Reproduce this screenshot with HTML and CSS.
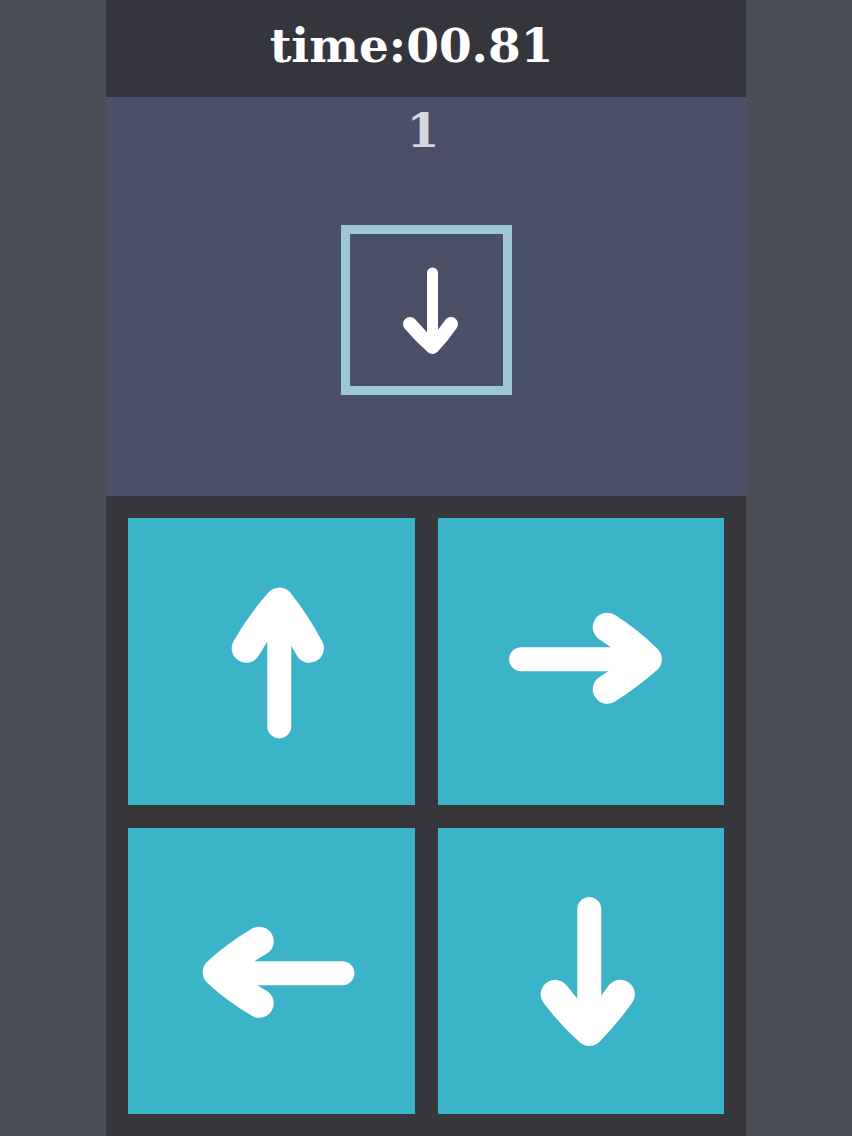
FILE: index.html
```html
<!DOCTYPE html>
<html lang="en">
<head>
<meta charset="utf-8">
<title>Arrow game</title>
<link rel="stylesheet" href="styles.css">
</head>
<body>
<div class="app">
  <header class="header"><span class="timer">time:00.81</span></header>
  <section class="stage">
    <div class="score">1</div>
    <div class="target">
      <svg class="target-arrow" viewBox="0 0 153 152" aria-hidden="true">
        <path class="shaft" d="M82.5 39 V108"/>
        <path class="head" d="M60 90 Q71 103 82.5 113 Q92 103 101 90"/>
      </svg>
    </div>
  </section>
  <section class="pad">
    <button class="tile" aria-label="up">
      <svg viewBox="0 0 286 286" aria-hidden="true">
        <path class="shaft" d="M151 208 V90"/>
        <path class="head" d="M118 130 Q133 104 151 84 Q167 104 181 130"/>
      </svg>
    </button>
    <button class="tile" aria-label="right">
      <svg viewBox="0 0 286 286" aria-hidden="true">
        <path class="shaft" d="M83 141 H204"/>
        <path class="head" d="M169 109 Q191 123 209 141 Q191 157 169 171"/>
      </svg>
    </button>
    <button class="tile" aria-label="left">
      <svg viewBox="0 0 286 286" aria-hidden="true">
        <path class="shaft" d="M214 145 H94"/>
        <path class="head" d="M131 113 Q107 127 89 144 Q107 161 131 175"/>
      </svg>
    </button>
    <button class="tile" aria-label="down">
      <svg viewBox="0 0 286 286" aria-hidden="true">
        <path class="shaft" d="M151 81 V198"/>
        <path class="head" d="M117 166 Q133 187 151 203 Q167 187 182 166"/>
      </svg>
    </button>
  </section>
</div>
</body>
</html>
```
FILE: styles.css
```css
html, body {
  margin: 0;
  padding: 0;
}
body {
  background: #4c4e57;
  font-family: "DejaVu Serif", "Liberation Serif", serif;
}
.app {
  width: 640px;
  height: 1136px;
  margin: 0 auto;
  display: flex;
  flex-direction: column;
}
.header {
  height: 97px;
  box-sizing: border-box;
  background: #35353e;
  display: flex;
  justify-content: center;
  padding: 22px 29px 0 0;
}
.timer {
  color: #ffffff;
  font-weight: bold;
  font-size: 47px;
  line-height: 47px;
}
.stage {
  height: 399px;
  box-sizing: border-box;
  background: #4b5067;
  display: flex;
  flex-direction: column;
  align-items: center;
  padding: 10px 6px 0 0;
}
.score {
  color: #d6d8df;
  font-weight: bold;
  font-size: 47px;
  line-height: 47px;
}
.target {
  margin: 71px 0 0 6px;
  width: 171px;
  height: 170px;
  box-sizing: border-box;
  border: 9px solid #9ec8d1;
}
.target-arrow {
  display: block;
  width: 153px;
  height: 152px;
}
.target-arrow path {
  fill: none;
  stroke: #ffffff;
  stroke-linecap: round;
  stroke-linejoin: round;
}
.target-arrow .shaft {
  stroke-width: 11;
}
.target-arrow .head {
  stroke-width: 14;
}
.pad {
  flex: 1;
  background: #36363b;
  padding: 22px;
  display: grid;
  grid-template-columns: 1fr 1fr;
  grid-template-rows: 1fr 1fr;
  gap: 23px;
}
.tile {
  background: #3bb4c9;
  border: none;
  padding: 0;
  margin: 0;
  display: block;
}
.tile svg {
  display: block;
  width: 100%;
  height: 100%;
}
.tile path {
  fill: none;
  stroke: #ffffff;
  stroke-linecap: round;
  stroke-linejoin: round;
}
.tile .shaft {
  stroke-width: 24;
}
.tile .head {
  stroke-width: 29;
}
```
